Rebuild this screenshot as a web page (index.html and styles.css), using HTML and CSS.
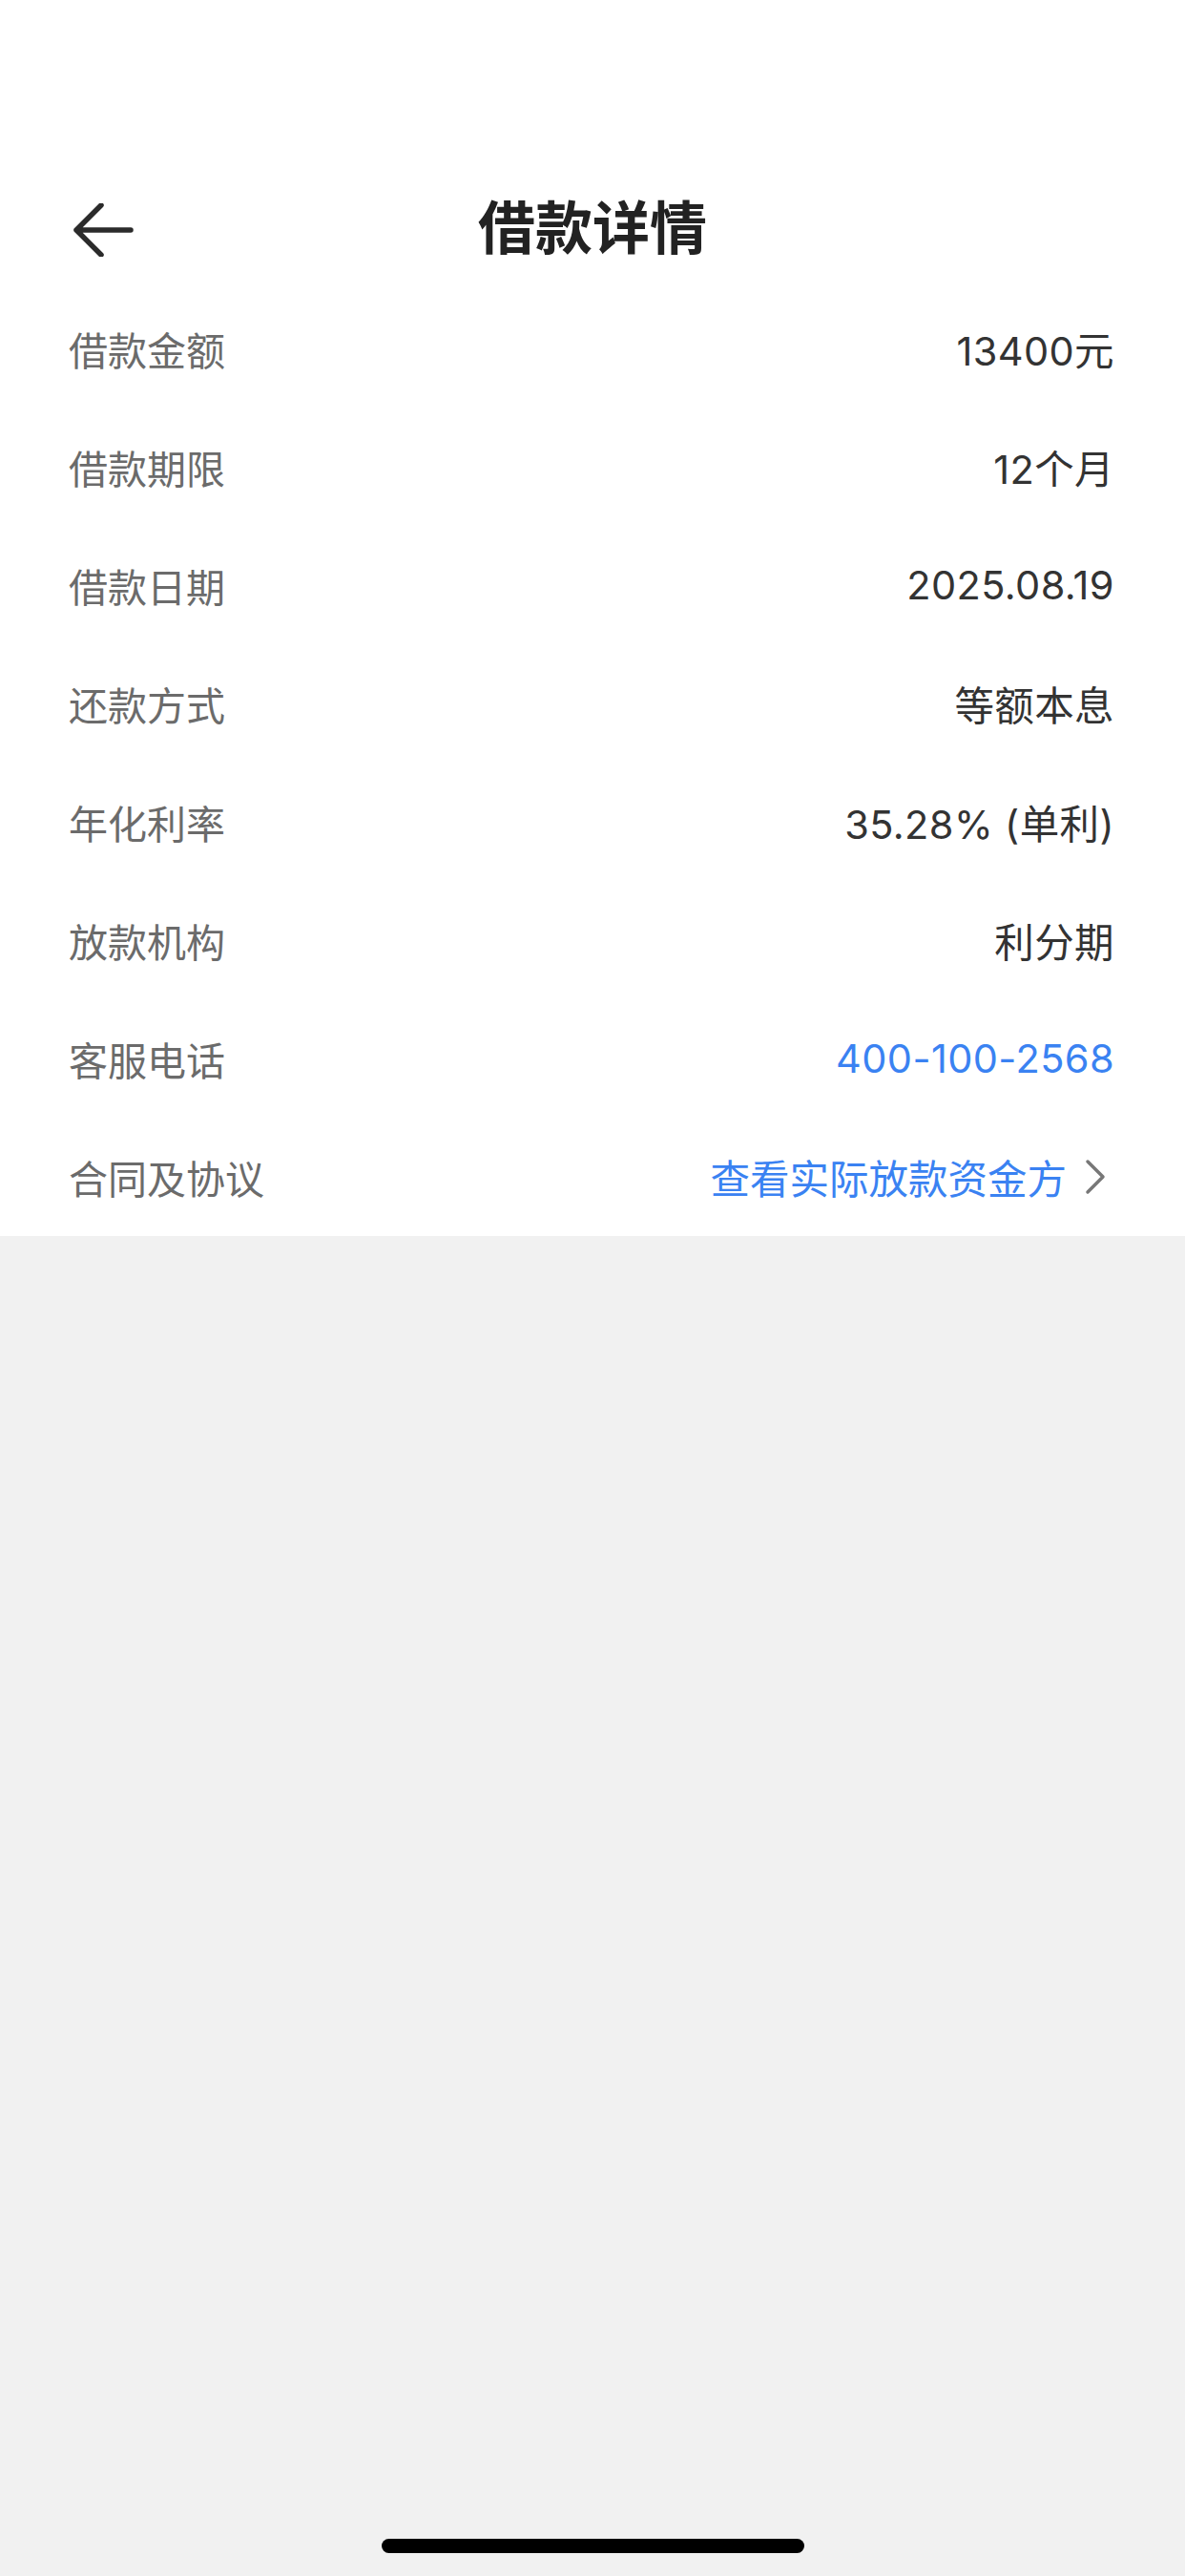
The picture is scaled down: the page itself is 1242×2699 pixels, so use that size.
FILE: index.html
```html
<!DOCTYPE html>
<html lang="zh-CN">
<head>
    <meta charset="UTF-8">
    <meta name="viewport" content="width=device-width, initial-scale=1.0">
    <title>借款详情</title>
    <link rel="stylesheet" href="styles.css">
</head>
<body>
    <div class="page-top">
        <div class="status-bar"></div>

        <!-- Navigation bar -->
        <div class="nav-bar">
            <button class="back-button" aria-label="返回">
                <svg width="64" height="56" viewBox="0 0 64 56">
                    <path d="M61 28H4M30 2L4 28l26 26" fill="none" stroke="#2b2b2b" stroke-width="5.5" stroke-linecap="round" stroke-linejoin="round"/>
                </svg>
            </button>
            <h1>借款详情</h1>
            <div></div>
        </div>

        <!-- Loan detail rows -->
        <div class="detail-list">
            <div class="detail-row">
                <span class="label">借款金额</span>
                <span class="value">13400元</span>
            </div>
            <div class="detail-row">
                <span class="label">借款期限</span>
                <span class="value">12个月</span>
            </div>
            <div class="detail-row">
                <span class="label">借款日期</span>
                <span class="value">2025.08.19</span>
            </div>
            <div class="detail-row">
                <span class="label">还款方式</span>
                <span class="value">等额本息</span>
            </div>
            <div class="detail-row">
                <span class="label">年化利率</span>
                <span class="value">35.28% (单利)</span>
            </div>
            <div class="detail-row">
                <span class="label">放款机构</span>
                <span class="value">利分期</span>
            </div>
            <div class="detail-row">
                <span class="label">客服电话</span>
                <span class="value link">400-100-2568</span>
            </div>
            <div class="detail-row">
                <span class="label">合同及协议</span>
                <span class="value link with-arrow">
                    查看实际放款资金方
                    <svg class="chevron" width="24" height="38" viewBox="0 0 24 38">
                        <path d="M4 3L20 19L4 35" fill="none" stroke="#777" stroke-width="3.5" stroke-linecap="round" stroke-linejoin="round"/>
                    </svg>
                </span>
            </div>
        </div>
    </div>

    <div class="home-indicator"></div>
</body>
</html>
```

FILE: styles.css
```css
* {
    margin: 0;
    padding: 0;
    box-sizing: border-box;
}
body {
    background-color: #f1f1f1;
    font-family: Inter, "Noto Sans CJK SC", sans-serif;
    color: #333;
    min-height: 100vh;
}
.page-top {
    background-color: #fff;
}
.status-bar {
    height: 176px;
}
.nav-bar {
    display: grid;
    grid-template-columns: 1fr auto 1fr;
    align-items: center;
    height: 127px;
    padding: 0 76px 3px;
}
.back-button {
    display: flex;
    align-items: center;
    background: none;
    border: none;
    width: 64px;
    height: 56px;
    margin-top: 6px;
    cursor: pointer;
}
.nav-bar h1 {
    font-size: 60px;
    font-weight: 700;
    color: #222;
    margin-bottom: 7px;
}
.detail-row {
    display: flex;
    justify-content: space-between;
    align-items: center;
    height: 124px;
    padding: 0 74px 0 72px;
}
.label {
    font-size: 41px;
    color: #6b6b6b;
}
.value {
    font-size: 41.5px;
    letter-spacing: 0.4px;
    color: #333;
}
.link {
    color: #3a82f2;
}
.with-arrow {
    display: flex;
    align-items: center;
    gap: 18px;
    letter-spacing: 0;
}
.chevron {
    margin-right: 8px;
}
.home-indicator {
    position: fixed;
    left: 400px;
    bottom: 24px;
    width: 443px;
    height: 15px;
    border-radius: 8px;
    background-color: #000;
}
```
